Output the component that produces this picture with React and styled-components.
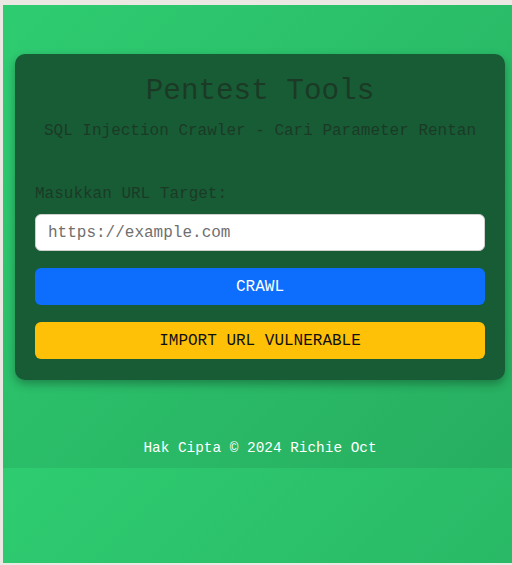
import React from "react";
import styled, { createGlobalStyle } from "styled-components";

const Global = createGlobalStyle`
  html, body { margin: 0; padding: 0; }
  body {
    background: #ebe7e3;
    overflow: hidden;
    font-family: "Liberation Mono", "Courier New", monospace;
  }
`;

const Frame = styled.div`
  margin: 5px 0 0 3px;
  width: 514px;
  height: 558px;
  background: linear-gradient(135deg, #2ecc71, #27ae60);
  background-size: 100% 463px;
  background-repeat: repeat-y;
`;

const Section = styled.div`
  height: 463px;
  padding: 49px 12px 0;
  box-sizing: border-box;
  display: flex;
  flex-direction: column;
`;

const Card = styled.div`
  background: #185c36;
  border-radius: 10px;
  box-shadow: 0 4px 10px rgba(0, 0, 0, 0.3);
  padding: 22px 20px 21px;
  display: flex;
  flex-direction: column;
`;

const Title = styled.h1`
  margin: 0;
  font-size: 29.3px;
  font-weight: normal;
  text-align: center;
  color: #1b3a25;
  line-height: 32px;
`;

const Subtitle = styled.p`
  margin: 14px 0 0;
  font-size: 16px;
  text-align: center;
  color: #1b3a25;
  line-height: 18px;
`;

const Label = styled.label`
  margin-top: 45px;
  font-size: 16px;
  color: #1b3a25;
  line-height: 18px;
`;

const Input = styled.input`
  margin-top: 11px;
  height: 37px;
  box-sizing: border-box;
  border: 1px solid #cfcfcf;
  border-radius: 6px;
  padding: 0 12px;
  font-family: "Liberation Mono", "Courier New", monospace;
  font-size: 16px;
  background: #fff;
  outline: none;
  &::placeholder { color: #6f6f6f; }
`;

const Button = styled.button`
  margin-top: ${(p) => p.$gap}px;
  height: 37px;
  border: none;
  border-radius: 6px;
  background: ${(p) => p.$bg};
  color: ${(p) => p.$fg};
  font-family: "Liberation Mono", "Courier New", monospace;
  font-size: 16px;
  cursor: pointer;
`;

const Footer = styled.footer`
  margin-top: 60px;
  text-align: center;
  color: #ffffff;
  font-size: 14.4px;
  line-height: 17px;
`;

export default function App() {
  return (
    <>
      <Global />
      <Frame>
        <Section>
          <Card>
            <Title>Pentest Tools</Title>
            <Subtitle>SQL Injection Crawler - Cari Parameter Rentan</Subtitle>
            <Label>Masukkan URL Target:</Label>
            <Input placeholder="https://example.com" />
            <Button $gap={17} $bg="#0d6efd" $fg="#ffffff">CRAWL</Button>
            <Button $gap={17} $bg="#ffc107" $fg="#111111">IMPORT URL VULNERABLE</Button>
          </Card>
          <Footer>Hak Cipta © 2024 Richie Oct</Footer>
        </Section>
      </Frame>
    </>
  );
}
